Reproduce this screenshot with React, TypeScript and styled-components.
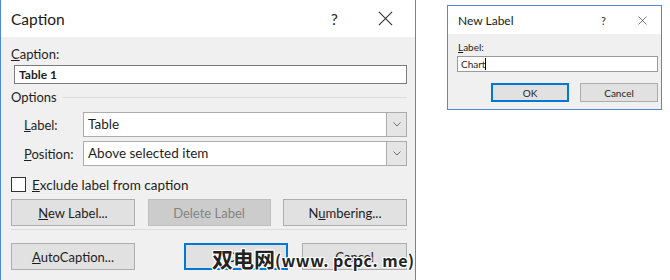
import React from 'react';
import styled, { createGlobalStyle } from 'styled-components';

const GlobalStyle = createGlobalStyle`
  html, body {
    margin: 0;
    padding: 0;
    background: #ffffff;
  }
  body {
    font-family: Lato, "Noto Sans", "Liberation Sans", sans-serif;
    color: #1e1e1e;
  }
`;

const CloseIcon = ({ size }: { size: number }) => (
  <svg width={size} height={size} viewBox="0 0 16 16">
    <path d="M1 1 L15 15 M15 1 L1 15" stroke="#2b2b2b" strokeWidth="1.1" fill="none" />
  </svg>
);

const Chevron = () => (
  <svg width="8" height="5" viewBox="0 0 8 5">
    <path d="M0.5 0.5 L4 4 L7.5 0.5" stroke="#707070" strokeWidth="1" fill="none" />
  </svg>
);

export default function App() {
  return (
    <Page>
      <GlobalStyle />
      <CaptionDialog>
        <TitleBar $height={37} $size={15.5} $right={22}>
          <TitleText>Caption</TitleText>
          <TitleButtons $gap={40}>
            <Help $size={16}>?</Help>
            <CloseIcon size={15} />
          </TitleButtons>
        </TitleBar>
        <DialogBody $padding="8px 8px 14px 10px">
          <FieldLabel>
            <u>C</u>aption:
          </FieldLabel>
          <CaptionInput>Table 1</CaptionInput>
          <GroupHeader>
            <span>Options</span>
            <GroupLine />
          </GroupHeader>
          <SelectRow $top={7}>
            <RowLabel>
              <u>L</u>abel:
            </RowLabel>
            <Select>
              <SelectValue>Table</SelectValue>
              <DropButton>
                <Chevron />
              </DropButton>
            </Select>
          </SelectRow>
          <SelectRow $top={4}>
            <RowLabel>
              <u>P</u>osition:
            </RowLabel>
            <Select>
              <SelectValue>Above selected item</SelectValue>
              <DropButton>
                <Chevron />
              </DropButton>
            </Select>
          </SelectRow>
          <CheckRow>
            <CheckBox />
            <span>
              <u>E</u>xclude label from caption
            </span>
          </CheckRow>
          <ButtonRow $top={7}>
            <Button $width={124}>
              <u>N</u>ew Label...
            </Button>
            <Button $width={123} disabled>
              Delete Label
            </Button>
            <Button $width={124}>
              N<u>u</u>mbering...
            </Button>
          </ButtonRow>
          <Separator />
          <ButtonRow $top={13}>
            <Button $width={124}>
              <u>A</u>utoCaption...
            </Button>
            <ButtonPair>
              <Button $width={104} $primary>
                OK
              </Button>
              <Button $width={105}>Cancel</Button>
            </ButtonPair>
          </ButtonRow>
          <Watermark>
            <WatermarkCjk>双电网</WatermarkCjk>
            <WatermarkLatin>(www. pcpc. me)</WatermarkLatin>
          </Watermark>
        </DialogBody>
      </CaptionDialog>

      <LabelDialog>
        <TitleBar $height={28} $size={12} $right={14}>
          <TitleText>New Label</TitleText>
          <TitleButtons $gap={32}>
            <Help $size={11}>?</Help>
            <CloseIcon size={9} />
          </TitleButtons>
        </TitleBar>
        <DialogBody $padding="3px 3px 7px 10px">
          <SmallLabel>
            <u>L</u>abel:
          </SmallLabel>
          <SmallInput>
            Chart
            <Caret />
          </SmallInput>
          <SmallButtons>
            <SmallButton $primary>OK</SmallButton>
            <SmallButton>Cancel</SmallButton>
          </SmallButtons>
        </DialogBody>
      </LabelDialog>
    </Page>
  );
}

const Page = styled.div`
  display: flex;
  align-items: flex-start;
  width: 670px;
  height: 280px;
  overflow: hidden;
`;

const CaptionDialog = styled.div`
  width: 414px;
  border-left: 1px solid #4d8ad6;
  border-right: 1px solid #4d8ad6;
  flex-shrink: 0;
`;

const LabelDialog = styled.div`
  width: 213px;
  margin: 5px 0 0 31px;
  border: 1px solid #4d8ad6;
  flex-shrink: 0;
`;

const TitleBar = styled.div<{ $height: number; $size: number; $right: number }>`
  display: flex;
  align-items: center;
  justify-content: space-between;
  height: ${(p) => p.$height}px;
  background: #ffffff;
  font-size: ${(p) => p.$size}px;
  padding: 0 ${(p) => p.$right}px 0 10px;
  box-sizing: border-box;
`;

const TitleText = styled.span`
  color: #1a1a1a;
`;

const TitleButtons = styled.div<{ $gap: number }>`
  display: flex;
  align-items: center;
  gap: ${(p) => p.$gap}px;
`;

const Help = styled.span<{ $size: number }>`
  font-size: ${(p) => p.$size}px;
  color: #2b2b2b;
`;

const DialogBody = styled.div<{ $padding: string }>`
  position: relative;
  display: flex;
  flex-direction: column;
  background: #f0f0f0;
  padding: ${(p) => p.$padding};
  font-size: 13px;
`;

const FieldLabel = styled.div`
  line-height: 18px;
`;

const CaptionInput = styled.div`
  height: 19px;
  margin: 2px 0 0 3px;
  padding: 0 4px;
  box-sizing: border-box;
  background: #ffffff;
  border: 1px solid #7a7a7a;
  font-weight: bold;
  font-size: 12px;
  line-height: 17px;
`;

const GroupHeader = styled.div`
  display: flex;
  align-items: center;
  gap: 6px;
  margin-top: 5px;
  line-height: 16px;
`;

const GroupLine = styled.div`
  flex: 1;
  height: 1px;
  background: #dcdcdc;
`;

const SelectRow = styled.div<{ $top: number }>`
  display: flex;
  align-items: center;
  margin-top: ${(p) => p.$top}px;
  padding-left: 13px;
`;

const RowLabel = styled.span`
  width: 59px;
`;

const Select = styled.div`
  flex: 1;
  display: flex;
  height: 25px;
  background: #ffffff;
  border: 1px solid #acacac;
  box-sizing: border-box;
`;

const SelectValue = styled.span`
  flex: 1;
  padding-left: 4px;
  line-height: 23px;
  font-size: 13.5px;
`;

const DropButton = styled.span`
  display: flex;
  align-items: center;
  justify-content: center;
  width: 19px;
  background: #e5e5e5;
  border-left: 1px solid #acacac;
`;

const CheckRow = styled.label`
  display: flex;
  align-items: center;
  gap: 6px;
  margin-top: 11px;
  height: 15px;
  font-size: 13.5px;
`;

const CheckBox = styled.span`
  width: 13px;
  height: 13px;
  background: #ffffff;
  border: 1px solid #333333;
`;

const ButtonRow = styled.div<{ $top: number }>`
  display: flex;
  justify-content: space-between;
  margin-top: ${(p) => p.$top}px;
`;

const ButtonPair = styled.div`
  display: flex;
  gap: 14px;
`;

const Button = styled.button<{ $primary?: boolean; $width: number }>`
  width: ${(p) => p.$width}px;
  height: 27px;
  padding: 0;
  font-family: inherit;
  font-size: 13px;
  color: #1e1e1e;
  background: #e1e1e1;
  border: ${(p) => (p.$primary ? '2px solid #0078d7' : '1px solid #adadad')};

  &:disabled {
    background: #cccccc;
    border-color: #bfbfbf;
    color: #838383;
  }
`;

const Separator = styled.div`
  height: 1px;
  margin-top: 3px;
  background: #dcdcdc;
`;

const Watermark = styled.div`
  position: absolute;
  left: 211px;
  bottom: 11px;
  display: flex;
  align-items: baseline;
  color: #222222;
  white-space: nowrap;
  text-shadow: -1px -1px 0 #fff, 1px -1px 0 #fff, -1px 1px 0 #fff, 1px 1px 0 #fff,
    0 1px 0 #fff, 0 -1px 0 #fff, 1px 0 0 #fff, -1px 0 0 #fff;
`;

const WatermarkCjk = styled.span`
  font-family: "Noto Sans CJK SC", sans-serif;
  font-size: 21px;
  font-weight: bold;
`;

const WatermarkLatin = styled.span`
  font-family: "Noto Sans CJK SC", "Noto Sans", sans-serif;
  font-size: 16px;
  font-weight: bold;
  letter-spacing: 0.5px;
`;

const SmallLabel = styled.div`
  font-size: 10px;
  line-height: 16px;
  margin-top: 2px;
`;

const SmallInput = styled.div`
  display: flex;
  align-items: center;
  height: 16px;
  margin: 1px 0 0 -1px;
  padding: 0 3px;
  box-sizing: border-box;
  background: #ffffff;
  border: 1px solid #9a9a9a;
  font-size: 10px;
`;

const Caret = styled.span`
  width: 1px;
  height: 12px;
  background: #000000;
`;

const SmallButtons = styled.div`
  display: flex;
  justify-content: flex-end;
  gap: 11px;
  margin-top: 11px;
`;

const SmallButton = styled.button<{ $primary?: boolean }>`
  width: 78px;
  height: 19px;
  padding: 0;
  font-family: inherit;
  font-size: 10px;
  color: #1e1e1e;
  background: #e1e1e1;
  border: ${(p) => (p.$primary ? '2px solid #0078d7' : '1px solid #adadad')};
`;
